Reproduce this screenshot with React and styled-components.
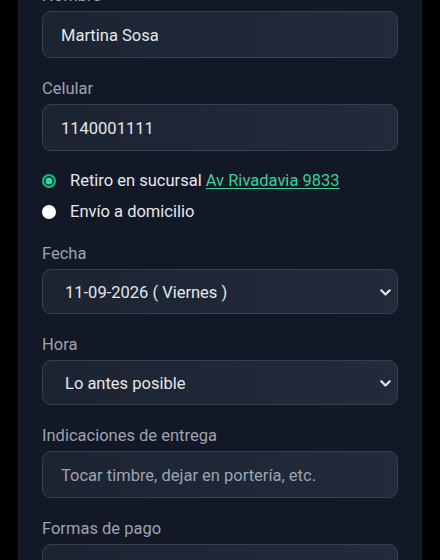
import React from "react";
import styled, { createGlobalStyle } from "styled-components";

const GlobalStyle = createGlobalStyle`
  *, *::before, *::after {
    box-sizing: border-box;
  }
  html, body {
    margin: 0;
    padding: 0;
    background: #000;
    font-family: Roboto, Inter, "Noto Sans", "Liberation Sans", sans-serif;
    -webkit-font-smoothing: antialiased;
  }
`;

const Chevron = () => (
  <svg width="11" height="7" viewBox="0 0 11 7" fill="none">
    <path
      d="M1.3 1.3 L5.5 5.5 L9.7 1.3"
      stroke="#e5e7eb"
      strokeWidth="2.2"
      strokeLinecap="round"
      strokeLinejoin="round"
    />
  </svg>
);

const App = () => {
  return (
    <>
      <GlobalStyle />
      <Page>
        <Panel>
          <Form>
            <Field>
              <Label>Nombre</Label>
              <Input defaultValue="Martina Sosa" readOnly />
            </Field>
            <Field>
              <Label>Celular</Label>
              <Input defaultValue="1140001111" readOnly />
            </Field>

            <RadioGroup>
              <RadioRow>
                <Radio checked />
                <span>
                  Retiro en sucursal <Link href="#">Av Rivadavia 9833</Link>
                </span>
              </RadioRow>
              <RadioRow>
                <Radio />
                <span>Envío a domicilio</span>
              </RadioRow>
            </RadioGroup>

            <Field>
              <Label>Fecha</Label>
              <Select>
                <span>11-09-2026 ( Viernes )</span>
                <Chevron />
              </Select>
            </Field>
            <Field>
              <Label>Hora</Label>
              <Select>
                <span>Lo antes posible</span>
                <Chevron />
              </Select>
            </Field>
            <Field>
              <Label>Indicaciones de entrega</Label>
              <Input placeholder="Tocar timbre, dejar en portería, etc." />
            </Field>
            <Field>
              <Label>Formas de pago</Label>
              <Input readOnly />
            </Field>
          </Form>
        </Panel>
      </Page>
    </>
  );
};

export default App;

const Page = styled.div`
  height: 560px;
  overflow: hidden;
  display: flex;
  justify-content: center;
  background: #000;
`;

const Panel = styled.div`
  width: 404px;
  padding: 0 23px;
  background: #121825;
  border-left: 1px solid #1a2130;
  border-right: 1px solid #1a2130;
`;

const Form = styled.div`
  display: flex;
  flex-direction: column;
  margin-top: -17px;
`;

const Field = styled.div`
  display: flex;
  flex-direction: column;
  margin-bottom: 18px;
`;

const Label = styled.label`
  height: 26px;
  line-height: 26px;
  margin-bottom: 2px;
  font-size: 16.5px;
  color: #9ca3af;
`;

const Input = styled.input`
  width: 100%;
  height: 47px;
  padding: 1px 18px 0;
  border: 1px solid #363f4e;
  border-radius: 9px;
  background: linear-gradient(90deg, #1c2432, #212b3a);
  color: #e5e7eb;
  font-family: inherit;
  font-size: 16.5px;
  outline: none;

  &::placeholder {
    color: #9ca3af;
  }
`;

const Select = styled.div`
  height: 45px;
  padding: 1px 6px 0 22px;
  display: flex;
  align-items: center;
  justify-content: space-between;
  border: 1px solid #363f4e;
  border-radius: 9px;
  background: linear-gradient(90deg, #1c2432, #212b3a);
  color: #e5e7eb;
  font-size: 16.5px;
`;

const RadioGroup = styled.div`
  display: flex;
  flex-direction: column;
  margin: -4px 0 14px;
`;

const RadioRow = styled.div`
  display: flex;
  align-items: center;
  gap: 14px;
  height: 31px;
  font-size: 16.5px;
  color: #e5e7eb;
`;

const Radio = styled.span`
  width: 14px;
  height: 14px;
  border-radius: 50%;
  flex-shrink: 0;
  background: ${(p) => (p.checked ? "#34d399" : "#ffffff")};
  border: ${(p) => (p.checked ? "2px solid #10b981" : "none")};
  box-shadow: ${(p) => (p.checked ? "inset 0 0 0 1.5px #0f1a1c" : "none")};
`;

const Link = styled.a`
  color: #34d399;
  text-decoration: underline;
  text-underline-offset: 2px;
`;
